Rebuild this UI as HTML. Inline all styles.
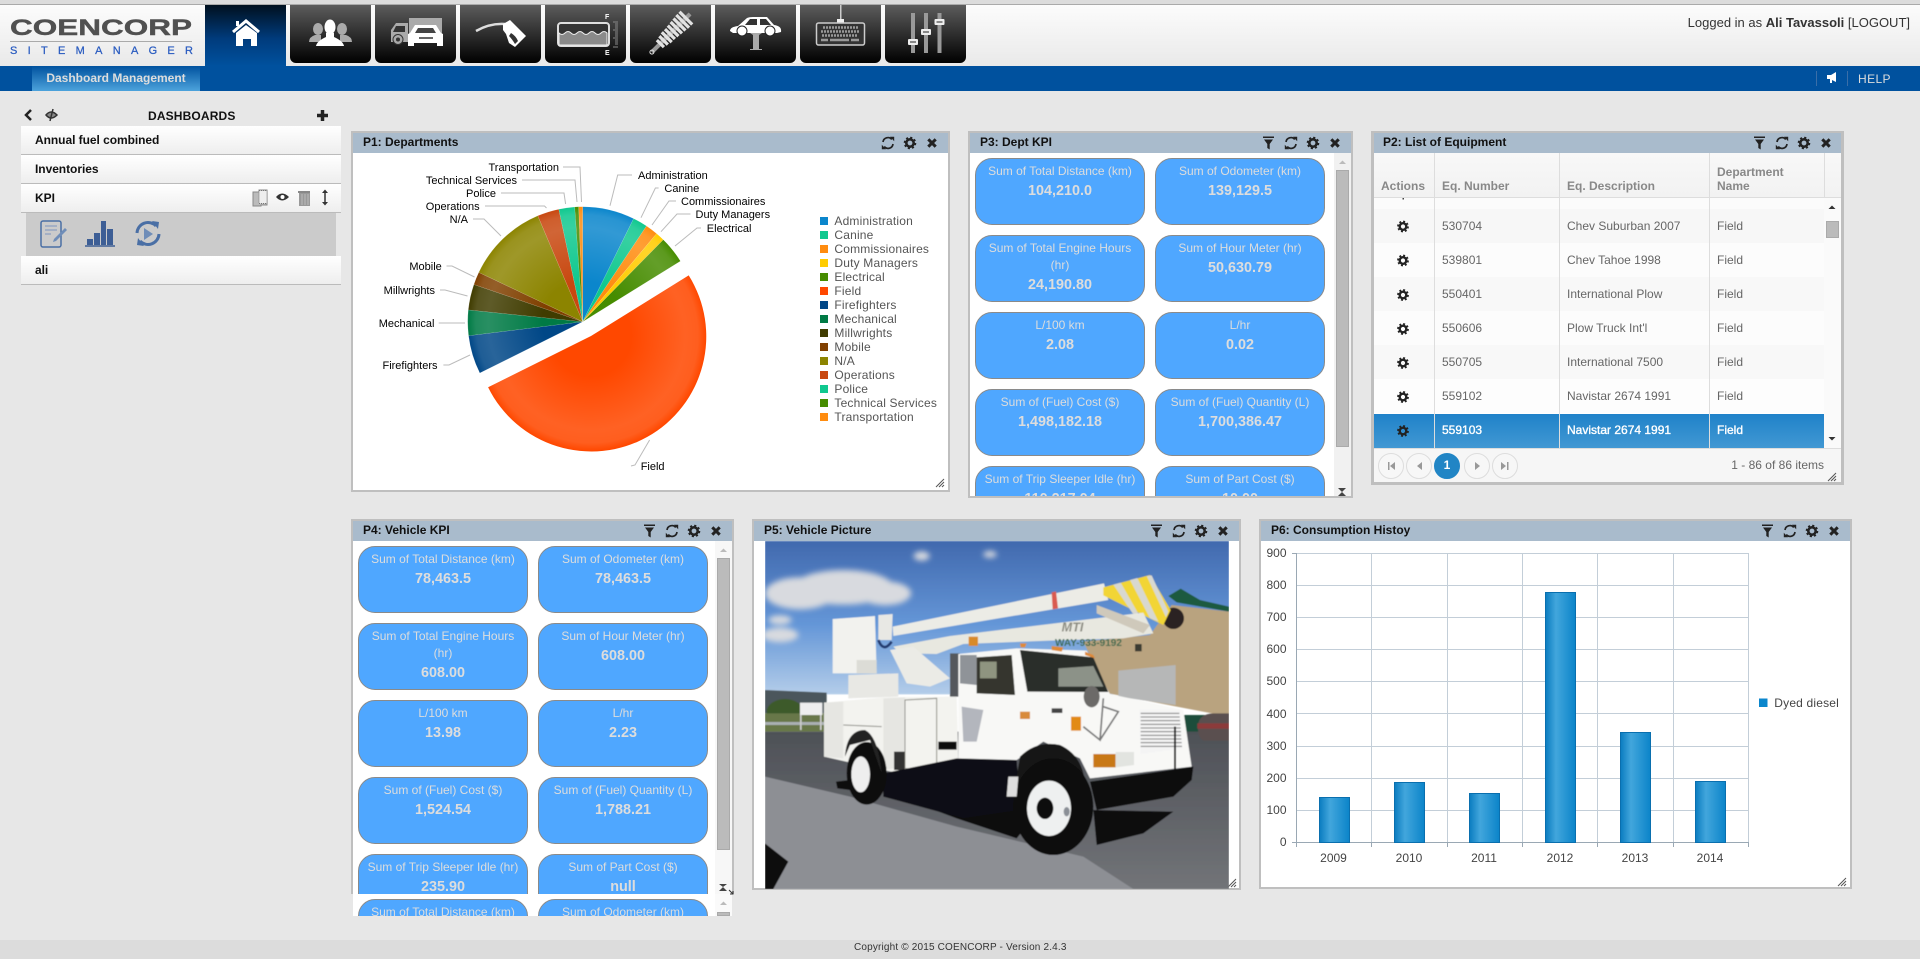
<!DOCTYPE html>
<html lang="en"><head><meta charset="utf-8"><title>COENCORP SiteManager</title>
<style>
*{box-sizing:border-box}
html,body{margin:0;padding:0;width:1920px;height:959px;overflow:hidden;background:#e7e7e7;font-family:"Liberation Sans",sans-serif;font-size:12px;color:#222}
.a{position:absolute}
.t{position:absolute;white-space:nowrap;line-height:14px}
.tab{position:absolute;top:5px;width:81px;height:58px;border-radius:0 0 6px 6px;background:linear-gradient(#5c5c5c,#000)}
.item{position:absolute;left:21px;width:320px;background:linear-gradient(#fff,#eee);border-bottom:1px solid #bbb;font-weight:bold;color:#111;padding-left:14px;line-height:28px;letter-spacing:-.05px}
.p{position:absolute;border:2px solid #bfbfbf;background:#fff}
.h{position:absolute;left:0;right:0;top:0;height:20px;background:#a9bbcc;font-weight:bold;color:#111;line-height:18px;padding-left:10px}
.clip{position:absolute;overflow:hidden;background:#fff}
.c{position:absolute;width:170px;height:67px;border:1px solid #8a8a8a;border-radius:17px;background:#4fa7ff;color:#ddd;text-align:center;line-height:17px;padding:4px 6px 0}
.c b{display:block;font-size:14.4px;line-height:22px}
.sb{position:absolute;border:1px solid #aaa;background:#bbb}
.row{position:absolute;left:1374px;width:450px;height:34px;color:#666}
.hd{position:absolute;color:#888;font-weight:bold;line-height:14px;white-space:nowrap}
.pg{position:absolute;top:453px;width:26px;height:26px;border:1px solid #ddd;border-radius:50%;background:#f7f7f7}
</style></head><body>

<div class="a" style="left:0;top:0;width:1920px;height:5px;background:#dcdcdc;border-bottom:1px solid #aaa"></div>
<div class="a" style="left:0;top:5px;width:1920px;height:61px;background:linear-gradient(#fcfcfc,#e9e9e9)"></div>
<div class="a" style="left:205px;top:5px;width:81px;height:61px;background:linear-gradient(#00101f,#003b7c 55%,#00519e)"></div>
<div class="tab" style="left:290px"></div><div class="tab" style="left:375px"></div><div class="tab" style="left:460px"></div><div class="tab" style="left:545px"></div><div class="tab" style="left:630px"></div><div class="tab" style="left:715px"></div><div class="tab" style="left:800px"></div><div class="tab" style="left:885px"></div>
<div class="a" style="left:0;top:66px;width:1920px;height:25px;background:#00519e"></div>
<div class="a" style="left:32px;top:66px;width:168px;height:25px;background:linear-gradient(#00529f,#4da3dc);color:#ddd;font-weight:bold;text-align:center;line-height:24px">Dashboard Management</div>
<div class="a" style="left:1816px;top:71px;width:1px;height:15px;background:#3a6ea8"></div>
<div class="a" style="left:1847px;top:71px;width:1px;height:15px;background:#3a6ea8"></div>
<div class="t" style="left:1858px;top:72px;color:#ddd;letter-spacing:.4px">HELP</div>
<div class="t" style="right:10px;top:16px;color:#333;font-size:13px">Logged in as <b>Ali Tavassoli</b> [LOGOUT]</div>

<div class="t" style="left:148px;top:109px;font-weight:bold;color:#111;letter-spacing:.15px">DASHBOARDS</div>
<div class="item" style="top:126px;height:29px">Annual fuel combined</div>
<div class="item" style="top:155px;height:29px">Inventories</div>
<div class="item" style="top:184px;height:29px">KPI</div>
<div class="a" style="left:26px;top:213px;width:310px;height:43px;background:#cbcbcb"></div>
<div class="item" style="top:256px;height:29px">ali</div>

<!-- P1 -->
<div class="p" style="left:351px;top:131px;width:599px;height:361px"><div class="h">P1: Departments</div></div>

<!-- P3 -->
<div class="p" style="left:968px;top:131px;width:385px;height:367px"><div class="h">P3: Dept KPI</div></div>
<div class="clip" style="left:970px;top:153px;width:364px;height:343px">
<div class="c" style="left:5px;top:5px">Sum of Total Distance (km)<b>104,210.0</b></div>
<div class="c" style="left:185px;top:5px">Sum of Odometer (km)<b>139,129.5</b></div>
<div class="c" style="left:5px;top:82px">Sum of Total Engine Hours (hr)<b>24,190.80</b></div>
<div class="c" style="left:185px;top:82px">Sum of Hour Meter (hr)<b>50,630.79</b></div>
<div class="c" style="left:5px;top:159px">L/100 km<b>2.08</b></div>
<div class="c" style="left:185px;top:159px">L/hr<b>0.02</b></div>
<div class="c" style="left:5px;top:236px">Sum of (Fuel) Cost ($)<b>1,498,182.18</b></div>
<div class="c" style="left:185px;top:236px">Sum of (Fuel) Quantity (L)<b>1,700,386.47</b></div>
<div class="c" style="left:5px;top:313px;padding-left:2px;padding-right:2px">Sum of Trip Sleeper Idle (hr)<b>110,217.04</b></div>
<div class="c" style="left:185px;top:313px">Sum of Part Cost ($)<b>10.00</b></div>
</div>
<div class="a" style="left:1334px;top:153px;width:17px;height:343px;background:#f1f1f1"></div>
<div class="sb" style="left:1336px;top:170px;width:13px;height:277px"></div>

<!-- P2 -->
<div class="p" style="left:1371px;top:131px;width:473px;height:354px;border-width:2px 3px 3px"><div class="h" style="padding-left:9px">P2: List of Equipment</div></div>
<div class="a" style="left:1374px;top:153px;width:467px;height:45px;background:linear-gradient(#f8f8f8,#f2f2f2);border-bottom:1px solid #ddd"></div>
<div class="a" style="left:1374px;top:198px;width:450px;height:11px;background:#fbfbfb"></div>
<div class="a" style="left:1824px;top:198px;width:17px;height:251px;background:#fafafa"></div>
<div class="row" style="top:209px;background:#f7f7f7"></div>
<div class="row" style="top:243px;background:#fcfcfc"></div>
<div class="row" style="top:277px;background:#f8f8f8"></div>
<div class="row" style="top:311px;background:#fcfcfc"></div>
<div class="row" style="top:345px;background:#f8f8f8"></div>
<div class="row" style="top:379px;background:#fdfdfd"></div>
<div class="row" style="top:414px;background:linear-gradient(#1f82c9,#4298d3)"></div>
<div class="a" style="left:1434px;top:153px;width:1px;height:295px;background:#ddd"></div>
<div class="a" style="left:1559px;top:153px;width:1px;height:295px;background:#ddd"></div>
<div class="a" style="left:1709px;top:153px;width:1px;height:295px;background:#ddd"></div>
<div class="a" style="left:1824px;top:153px;width:1px;height:45px;background:#ddd"></div>
<div class="hd" style="left:1381px;top:179px">Actions</div>
<div class="hd" style="left:1442px;top:179px">Eq. Number</div>
<div class="hd" style="left:1567px;top:179px">Eq. Description</div>
<div class="hd" style="left:1717px;top:165px">Department</div>
<div class="hd" style="left:1717px;top:179px">Name</div>
<div class="t" style="left:1442px;top:219px;color:#666">530704</div><div class="t" style="left:1567px;top:219px;color:#666">Chev Suburban 2007</div><div class="t" style="left:1717px;top:219px;color:#666">Field</div>
<div class="t" style="left:1442px;top:253px;color:#666">539801</div><div class="t" style="left:1567px;top:253px;color:#666">Chev Tahoe 1998</div><div class="t" style="left:1717px;top:253px;color:#666">Field</div>
<div class="t" style="left:1442px;top:287px;color:#666">550401</div><div class="t" style="left:1567px;top:287px;color:#666">International Plow</div><div class="t" style="left:1717px;top:287px;color:#666">Field</div>
<div class="t" style="left:1442px;top:321px;color:#666">550606</div><div class="t" style="left:1567px;top:321px;color:#666">Plow Truck Int'l</div><div class="t" style="left:1717px;top:321px;color:#666">Field</div>
<div class="t" style="left:1442px;top:355px;color:#666">550705</div><div class="t" style="left:1567px;top:355px;color:#666">International 7500</div><div class="t" style="left:1717px;top:355px;color:#666">Field</div>
<div class="t" style="left:1442px;top:389px;color:#666">559102</div><div class="t" style="left:1567px;top:389px;color:#666">Navistar 2674 1991</div><div class="t" style="left:1717px;top:389px;color:#666">Field</div>
<div class="t" style="left:1442px;top:423px;color:#fff;-webkit-text-stroke:.35px #fff">559103</div><div class="t" style="left:1567px;top:423px;color:#fff;-webkit-text-stroke:.35px #fff">Navistar 2674 1991</div><div class="t" style="left:1717px;top:423px;color:#fff;-webkit-text-stroke:.35px #fff">Field</div>
<div class="sb" style="left:1826px;top:221px;width:13px;height:17px"></div>
<div class="a" style="left:1374px;top:448px;width:467px;height:34px;background:#f6f6f6;border-top:1px solid #ddd"></div>
<div class="pg" style="left:1378px"></div><div class="pg" style="left:1406px"></div>
<div class="pg" style="left:1434px;background:#2185c5;border-color:#2185c5;color:#fff;font-weight:bold;text-align:center;line-height:23px">1</div>
<div class="pg" style="left:1464px"></div><div class="pg" style="left:1492px"></div>
<div class="t" style="right:96px;top:458px;color:#666">1 - 86 of 86 items</div>

<!-- P4 -->
<div class="p" style="left:351px;top:519px;width:383px;height:380px"><div class="h">P4: Vehicle KPI</div></div>
<div class="clip" style="left:353px;top:541px;width:362px;height:353px">
<div class="c" style="left:5px;top:5px">Sum of Total Distance (km)<b>78,463.5</b></div>
<div class="c" style="left:185px;top:5px">Sum of Odometer (km)<b>78,463.5</b></div>
<div class="c" style="left:5px;top:82px">Sum of Total Engine Hours (hr)<b>608.00</b></div>
<div class="c" style="left:185px;top:82px">Sum of Hour Meter (hr)<b>608.00</b></div>
<div class="c" style="left:5px;top:159px">L/100 km<b>13.98</b></div>
<div class="c" style="left:185px;top:159px">L/hr<b>2.23</b></div>
<div class="c" style="left:5px;top:236px">Sum of (Fuel) Cost ($)<b>1,524.54</b></div>
<div class="c" style="left:185px;top:236px">Sum of (Fuel) Quantity (L)<b>1,788.21</b></div>
<div class="c" style="left:5px;top:313px;padding-left:2px;padding-right:2px">Sum of Trip Sleeper Idle (hr)<b>235.90</b></div>
<div class="c" style="left:185px;top:313px">Sum of Part Cost ($)<b>null</b></div>
</div>
<div class="a" style="left:715px;top:541px;width:17px;height:353px;background:#f7f7f7"></div>
<div class="sb" style="left:717px;top:558px;width:13px;height:292px"></div>
<div class="a" style="left:351px;top:894px;width:383px;height:30px;background:#e7e7e7"></div>
<div class="clip" style="left:353px;top:894px;width:362px;height:22px">
<div class="c" style="left:5px;top:5px">Sum of Total Distance (km)</div>
<div class="c" style="left:185px;top:5px">Sum of Odometer (km)</div>
</div>
<div class="a" style="left:715px;top:894px;width:17px;height:22px;background:#fafafa"></div>
<div class="sb" style="left:717px;top:912px;width:13px;height:4px"></div>

<!-- P5 -->
<div class="p" style="left:752px;top:519px;width:489px;height:371px"><div class="h">P5: Vehicle Picture</div></div>
<!-- P6 -->
<div class="p" style="left:1259px;top:519px;width:593px;height:370px"><div class="h">P6: Consumption Histoy</div></div>

<div class="a" style="left:0;top:940px;width:1920px;height:19px;background:#dcdcdc"></div>
<div class="t" style="left:854px;top:941px;font-size:10px;color:#333;letter-spacing:.17px">Copyright © 2015 COENCORP - Version 2.4.3</div>

<svg class="a" style="left:0;top:0;pointer-events:none" width="1920" height="959" viewBox="0 0 1920 959" font-family="Liberation Sans, sans-serif">
<defs>
<radialGradient id="bev1" gradientUnits="userSpaceOnUse" cx="582.7" cy="321.7" r="115"><stop offset=".35" stop-color="#fff" stop-opacity="0"/><stop offset=".82" stop-color="#fff" stop-opacity=".16"/><stop offset=".93" stop-color="#fff" stop-opacity=".12"/><stop offset="1" stop-color="#fff" stop-opacity="0"/></radialGradient>
<radialGradient id="bev2" gradientUnits="userSpaceOnUse" cx="591" cy="336" r="115"><stop offset=".35" stop-color="#fff" stop-opacity="0"/><stop offset=".82" stop-color="#fff" stop-opacity=".14"/><stop offset=".93" stop-color="#fff" stop-opacity=".12"/><stop offset="1" stop-color="#fff" stop-opacity="0"/></radialGradient>
<linearGradient id="bar"><stop offset="0" stop-color="#0a7cc0"/><stop offset=".35" stop-color="#42a6dc"/><stop offset="1" stop-color="#0b84c9"/></linearGradient>
<linearGradient id="sky" x1="0" y1="0" x2="0" y2="1"><stop offset="0" stop-color="#4169ae"/><stop offset=".55" stop-color="#6597d8"/><stop offset="1" stop-color="#b4cde9"/></linearGradient>
<linearGradient id="road" x1="0" y1="0" x2="0" y2="1"><stop offset="0" stop-color="#4e5157"/><stop offset="1" stop-color="#727478"/></linearGradient>
<filter id="soft"><feGaussianBlur stdDeviation="1.4"/></filter>
<filter id="soft2" x="-20%" y="-40%" width="140%" height="180%"><feGaussianBlur stdDeviation="9"/></filter>
</defs>

<!-- logo -->
<text x="10" y="35" font-size="22.500" font-weight="bold" fill="#505050" stroke="#505050" stroke-width=".4" textLength="182" lengthAdjust="spacingAndGlyphs">COENCORP</text>
<rect x="10" y="41" width="182" height="1" fill="#aaa"/>
<text x="10" y="54" font-size="11" fill="#2a5cc0" stroke="#2a5cc0" stroke-width=".25" textLength="183" lengthAdjust="spacing">SITEMANAGER</text>

<!-- home -->
<path d="M233 32L246 21L259 32" fill="none" stroke="#fff" stroke-width="3"/><rect x="236" y="21" width="3" height="5" fill="#fff"/>
<path d="M236 33L246 25L257 33V46H251V39H243V46H236Z" fill="#fff"/>
<!-- people -->
<g fill="#aaa"><ellipse cx="318" cy="29" rx="5" ry="6"/><path d="M309 42q0-5 6-7h6v7z"/><ellipse cx="342" cy="29" rx="5" ry="6"/><path d="M352 42q0-5-6-7h-6v7z"/></g>
<g fill="#fff"><ellipse cx="330" cy="27" rx="5.500" ry="7.500"/><path d="M316 46q1-5 10-9v-4h8v4q9 4 10 9z"/></g>
<!-- truck -->
<g fill="#aaa"><rect x="409" y="18" width="33" height="19"/><path d="M391 42V30l5-7h12v19z"/></g><path d="M396 26h9v6h-12z" fill="#333"/><circle cx="398" cy="39.500" r="5" fill="#aaa" stroke="#333"/><circle cx="398" cy="39.500" r="2" fill="#333"/>
<path d="M415 25h21l5 8 2 1v12h-6v-3h-23v3h-6V34l2-1z" fill="#fff"/><path d="M418 28h15l3 5h-21z" fill="#444"/><rect x="419" y="37" width="14" height="2" fill="#666"/>
<!-- nozzle -->
<path d="M476 31Q490 23 505 24" fill="none" stroke="#ddd" stroke-width="2.500"/>
<path d="M503 24l7-4 16 16-11 11-6-4-3-9-3-4z" fill="#fff"/><path d="M511 33q5 3 7 8l-3 3q-3-5-6-8z" fill="#333"/>
<!-- tank -->
<rect x="558" y="23" width="51" height="23" rx="3" fill="#333" stroke="#ddd" stroke-width="2"/><path d="M559 33q3 3 6 0t6 0 6 0 6 0 6 0 6 0 6 0 6 0V45H559Z" fill="#8a8a8a" stroke="#eee"/>
<text x="605" y="19" font-size="7" font-weight="bold" fill="#fff">F</text><text x="605" y="55" font-size="7" font-weight="bold" fill="#fff">E</text>
<path d="M613 22h5M615 24h3M615 26h3M615 28h3M613 30h5M615 32h3M615 34h3M615 36h3M613 38h5M615 40h3M615 42h3M615 44h3M613 47h5" stroke="#888" stroke-width="1"/>
<!-- spring -->
<g transform="translate(671 33) rotate(-45) rotate(90)"><rect x="-2" y="-26" width="4" height="52" fill="#999"/></g>
<g transform="translate(671 33) rotate(-45)"><rect x="-27" y="-2" width="54" height="4" fill="#999"/><path d="M-15-5v10M-10.500-6v12M-6-7v14M-1.500-7v14M3-7.500v15M7.500-8v16M12-8.500v17M16.500-9v18M21-9v18" stroke="#e2e2e2" stroke-width="3.200"/><circle cx="-27" cy="0" r="2" fill="none" stroke="#ddd"/></g>
<!-- lift -->
<path d="M730 31q0-4 8-5l9-8q2-1 6-1h14l7 8q8 1 7 7l-4 1H733z" fill="#fff"/><path d="M750 19h7v6h-12zM760 19h6l5 6h-11z" fill="#333"/>
<circle cx="742" cy="31" r="5" fill="#fff" stroke="#222"/><circle cx="770" cy="31" r="5" fill="#fff" stroke="#222"/>
<path d="M750 33h12l-3 2v14h3v1h-12v-1h3V35z" fill="#aaa"/>
<!-- keyboard -->
<rect x="840" y="5" width="1.500" height="16" fill="#ccc"/><rect x="837" y="19" width="7" height="4" fill="#eee"/>
<rect x="816.500" y="23" width="48" height="22" rx="2" fill="#333" stroke="#ccc" stroke-width="1.500"/>
<path d="M823 27.500h35M821 31.500h38M822 35.500h36" stroke="#999" stroke-width="2.500" stroke-dasharray="2 1" fill="none"/><path d="M821 40h7M830 40h19M851 40h8" stroke="#999" stroke-width="2.500"/>
<!-- sliders -->
<g fill="#999"><rect x="911" y="13" width="4" height="40"/><rect x="924" y="13" width="4" height="40"/><rect x="937.500" y="13" width="4" height="40"/></g>
<g fill="#eee"><rect x="908" y="39" width="10" height="6" rx="1"/><rect x="921" y="29" width="10" height="6" rx="1"/><rect x="934.500" y="19" width="10" height="6" rx="1"/></g>
<path d="M910 42h6M923 32h6M936.500 22h6" stroke="#222"/>
<!-- help flag -->
<path d="M1827 75h4l5-3v10l-4-2v3h-2v-4h-3z" fill="#fff"/>

<!-- sidebar icons -->
<path d="M31 110l-5 5 5 5" fill="none" stroke="#222" stroke-width="2.500"/>
<path d="M46 115q5-6 11 0-6 6-11 0z" fill="#888" stroke="#333" stroke-width="1.500"/><path d="M53 109l-3 12" stroke="#333" stroke-width="1.500"/>
<path d="M322.500 110v11M317 115.500h11" stroke="#222" stroke-width="3.500"/>
<path d="M253 192h6v-2h8v15h-6v1h-8z" fill="#bbb" stroke="#888"/><rect x="259" y="190.500" width="8" height="13" fill="#eee" stroke="#777" stroke-dasharray="1 1"/>
<path d="M276 197q6-7 13 0-7 7-13 0z" fill="#333"/><circle cx="282.500" cy="197" r="2" fill="#fff"/>
<path d="M299 193h11v13h-11z" fill="#999"/><rect x="298" y="191" width="12" height="2" fill="#888"/><path d="M302 194v11M305 194v11M308 194v11" stroke="#bbb"/>
<path d="M325 191v12" stroke="#333" stroke-width="1.500"/><path d="M322 193l3-3.500 3 3.500zM322 202l3 3.500 3-3.500z" fill="#333"/>
<rect x="41" y="221" width="20" height="26" rx="2" fill="none" stroke="#4a6fa5" stroke-width="1.500"/><path d="M45 226h12M45 230h12M45 234h6" stroke="#7c96bf"/><path d="M65 228l2 2-11 11-3 1 1-3z" fill="#6f8db8"/>
<path d="M85 246h30" stroke="#3d5e95" stroke-width="1.500"/><path d="M87 239h6v6h-6zM94 233h6v12h-6zM101 221h5v24h-5zM107 229h6v16h-6z" fill="#3d5e95"/>
<path d="M137 233a11 11 0 0 1 19-7M159 234a11 11 0 0 1-19 7" fill="none" stroke="#4a6fa5" stroke-width="3"/><path d="M152 221l7 1-1 7zM144 246l-7-1 1-7z" fill="#4a6fa5"/><path d="M144 228l9 6-9 6z" fill="#6f8db8"/>

<!-- panel header icons -->
<g>
<g transform="translate(888 143)"><path d="M-5-1A5 5 0 0 1 3.800-3.600M5 1A5 5 0 0 1-3.800 3.600" fill="none" stroke="#222" stroke-width="1.700"/><path d="M2-6.200H6.200V-1.800zM-2 6.200H-6.200V1.800z" fill="#222"/></g>
<g transform="translate(910 143)"><circle r="3.700" fill="none" stroke="#222" stroke-width="2.600"/><circle r="5.400" fill="none" stroke="#222" stroke-width="1.800" stroke-dasharray="2.120 2.120"/></g>
<g transform="translate(932 143)"><path d="M-3.700-3.700L3.700 3.700M3.700-3.700L-3.700 3.700" stroke="#222" stroke-width="3"/></g>
</g>
<g>
<g transform="translate(1269 143)"><path d="M-6-6.500H5V-5H-6zM-5-3.500H4L.7 1V6.500L-1.700 5V1z" fill="#222"/></g>
<g transform="translate(1291 143)"><path d="M-5-1A5 5 0 0 1 3.800-3.600M5 1A5 5 0 0 1-3.800 3.600" fill="none" stroke="#222" stroke-width="1.700"/><path d="M2-6.200H6.200V-1.800zM-2 6.200H-6.200V1.800z" fill="#222"/></g>
<g transform="translate(1313 143)"><circle r="3.700" fill="none" stroke="#222" stroke-width="2.600"/><circle r="5.400" fill="none" stroke="#222" stroke-width="1.800" stroke-dasharray="2.120 2.120"/></g>
<g transform="translate(1335 143)"><path d="M-3.700-3.700L3.700 3.700M3.700-3.700L-3.700 3.700" stroke="#222" stroke-width="3"/></g>
</g>
<g>
<g transform="translate(1760 143)"><path d="M-6-6.500H5V-5H-6zM-5-3.500H4L.7 1V6.500L-1.700 5V1z" fill="#222"/></g>
<g transform="translate(1782 143)"><path d="M-5-1A5 5 0 0 1 3.800-3.600M5 1A5 5 0 0 1-3.800 3.600" fill="none" stroke="#222" stroke-width="1.700"/><path d="M2-6.200H6.200V-1.800zM-2 6.200H-6.200V1.800z" fill="#222"/></g>
<g transform="translate(1804 143)"><circle r="3.700" fill="none" stroke="#222" stroke-width="2.600"/><circle r="5.400" fill="none" stroke="#222" stroke-width="1.800" stroke-dasharray="2.120 2.120"/></g>
<g transform="translate(1826 143)"><path d="M-3.700-3.700L3.700 3.700M3.700-3.700L-3.700 3.700" stroke="#222" stroke-width="3"/></g>
</g>
<g>
<g transform="translate(650 531)"><path d="M-6-6.500H5V-5H-6zM-5-3.500H4L.7 1V6.500L-1.700 5V1z" fill="#222"/></g>
<g transform="translate(672 531)"><path d="M-5-1A5 5 0 0 1 3.800-3.600M5 1A5 5 0 0 1-3.800 3.600" fill="none" stroke="#222" stroke-width="1.700"/><path d="M2-6.200H6.200V-1.800zM-2 6.200H-6.200V1.800z" fill="#222"/></g>
<g transform="translate(694 531)"><circle r="3.700" fill="none" stroke="#222" stroke-width="2.600"/><circle r="5.400" fill="none" stroke="#222" stroke-width="1.800" stroke-dasharray="2.120 2.120"/></g>
<g transform="translate(716 531)"><path d="M-3.700-3.700L3.700 3.700M3.700-3.700L-3.700 3.700" stroke="#222" stroke-width="3"/></g>
</g>
<g>
<g transform="translate(1157 531)"><path d="M-6-6.500H5V-5H-6zM-5-3.500H4L.7 1V6.500L-1.700 5V1z" fill="#222"/></g>
<g transform="translate(1179 531)"><path d="M-5-1A5 5 0 0 1 3.800-3.600M5 1A5 5 0 0 1-3.800 3.600" fill="none" stroke="#222" stroke-width="1.700"/><path d="M2-6.200H6.200V-1.800zM-2 6.200H-6.200V1.800z" fill="#222"/></g>
<g transform="translate(1201 531)"><circle r="3.700" fill="none" stroke="#222" stroke-width="2.600"/><circle r="5.400" fill="none" stroke="#222" stroke-width="1.800" stroke-dasharray="2.120 2.120"/></g>
<g transform="translate(1223 531)"><path d="M-3.700-3.700L3.700 3.700M3.700-3.700L-3.700 3.700" stroke="#222" stroke-width="3"/></g>
</g>
<g>
<g transform="translate(1768 531)"><path d="M-6-6.500H5V-5H-6zM-5-3.500H4L.7 1V6.500L-1.700 5V1z" fill="#222"/></g>
<g transform="translate(1790 531)"><path d="M-5-1A5 5 0 0 1 3.800-3.600M5 1A5 5 0 0 1-3.800 3.600" fill="none" stroke="#222" stroke-width="1.700"/><path d="M2-6.200H6.200V-1.800zM-2 6.200H-6.200V1.800z" fill="#222"/></g>
<g transform="translate(1812 531)"><circle r="3.700" fill="none" stroke="#222" stroke-width="2.600"/><circle r="5.400" fill="none" stroke="#222" stroke-width="1.800" stroke-dasharray="2.120 2.120"/></g>
<g transform="translate(1834 531)"><path d="M-3.700-3.700L3.700 3.700M3.700-3.700L-3.700 3.700" stroke="#222" stroke-width="3"/></g>
</g>

<!-- pie -->
<g stroke="#fff" stroke-opacity=".2" stroke-width=".5">
<path d="M582.700 321.700L582.700 206.700A115 115 0 0 1 633.600 218.600Z" fill="#0b86cc"/>
<path d="M582.700 321.700L633.600 218.600A115 115 0 0 1 646.500 226Z" fill="#10c88f"/>
<path d="M582.700 321.700L646.500 226A115 115 0 0 1 656.600 233.600Z" fill="#ff8c0f"/>
<path d="M582.700 321.700L656.600 233.600A115 115 0 0 1 663.300 239.700Z" fill="#ffcc00"/>
<path d="M582.700 321.700L663.300 239.700A115 115 0 0 1 680.400 261.100Z" fill="#468c00"/>
<path d="M582.700 321.700L479.800 373A115 115 0 0 1 468.600 335.700Z" fill="#004787"/>
<path d="M582.700 321.700L468.600 335.700A115 115 0 0 1 468.300 309.900Z" fill="#007a45"/>
<path d="M582.700 321.700L468.300 309.900A115 115 0 0 1 473.900 284.500Z" fill="#403c00"/>
<path d="M582.700 321.700L473.900 284.500A115 115 0 0 1 478.800 272.400Z" fill="#804000"/>
<path d="M582.700 321.700L478.800 272.400A115 115 0 0 1 537.800 215.800Z" fill="#8c8400"/>
<path d="M582.700 321.700L537.800 215.800A115 115 0 0 1 558.800 209.200Z" fill="#c84810"/>
<path d="M582.700 321.700L558.800 209.200A115 115 0 0 1 574.700 207Z" fill="#10c88f"/>
<path d="M582.700 321.700L574.700 207A115 115 0 0 1 578.700 206.800Z" fill="#468c00"/>
<path d="M582.700 321.700L578.700 206.800A115 115 0 0 1 582.700 206.700Z" fill="#ff8c0f"/>
</g>
<path d="M582.700 321.700L479.800 373A115 115 0 0 1 582.700 206.700A115 115 0 0 1 680.400 261.100Z" fill="url(#bev1)"/>
<path d="M591 336L688.700 275.400A115 115 0 1 1 488.100 387.300Z" fill="#ff4800"/>
<path d="M591 336L688.700 275.400A115 115 0 1 1 488.100 387.300Z" fill="url(#bev2)"/>
<g fill="none" stroke="#bbb" stroke-width="1">
<path d="M563 167H580L581.500 202M522 180H575L577 202M501 193H564L565.600 204M485 206H544.500L546.500 208M473 219H484L501 236M446.500 266H452L474.500 277M440 290H445L467.500 296M438.700 323H465M443.400 365H449L470 355M631 466L635 465L649.600 440M632 175H617.700L610 205.700M658.600 188H655.400L641 217.700M676 201H669L652 225M690.500 214H677L661 231.700M701 228H697L675 246"/>
</g>
<g font-size="11" fill="#000" text-anchor="end">
<text x="559" y="171">Transportation</text><text x="517" y="184">Technical Services</text><text x="496" y="197">Police</text><text x="479.600" y="210">Operations</text><text x="468" y="223">N/A</text><text x="441.800" y="270">Mobile</text><text x="435" y="294">Millwrights</text><text x="434.400" y="327">Mechanical</text><text x="437.500" y="369">Firefighters</text>
</g>
<g font-size="11" fill="#000">
<text x="640.700" y="470">Field</text><text x="638" y="179">Administration</text><text x="664.400" y="192">Canine</text><text x="681" y="205">Commissionaires</text><text x="695.500" y="218">Duty Managers</text><text x="706.800" y="232">Electrical</text>
</g>
<g>
<rect x="820" y="217" width="8" height="8" fill="#0b86cc"/><rect x="820" y="231" width="8" height="8" fill="#10c88f"/><rect x="820" y="245" width="8" height="8" fill="#ff8c0f"/><rect x="820" y="259" width="8" height="8" fill="#ffcc00"/><rect x="820" y="273" width="8" height="8" fill="#468c00"/><rect x="820" y="287" width="8" height="8" fill="#ff4800"/><rect x="820" y="301" width="8" height="8" fill="#004787"/><rect x="820" y="315" width="8" height="8" fill="#007a45"/><rect x="820" y="329" width="8" height="8" fill="#403c00"/><rect x="820" y="343" width="8" height="8" fill="#804000"/><rect x="820" y="357" width="8" height="8" fill="#8c8400"/><rect x="820" y="371" width="8" height="8" fill="#c84810"/><rect x="820" y="385" width="8" height="8" fill="#10c88f"/><rect x="820" y="399" width="8" height="8" fill="#468c00"/><rect x="820" y="413" width="8" height="8" fill="#ff8c0f"/>
</g>
<g font-size="12" fill="#555" letter-spacing=".18">
<text x="834.400" y="225">Administration</text><text x="834.400" y="239">Canine</text><text x="834.400" y="253">Commissionaires</text><text x="834.400" y="267">Duty Managers</text><text x="834.400" y="281">Electrical</text><text x="834.400" y="295">Field</text><text x="834.400" y="309">Firefighters</text><text x="834.400" y="323">Mechanical</text><text x="834.400" y="337">Millwrights</text><text x="834.400" y="351">Mobile</text><text x="834.400" y="365">N/A</text><text x="834.400" y="379">Operations</text><text x="834.400" y="393">Police</text><text x="834.400" y="407">Technical Services</text><text x="834.400" y="421">Transportation</text>
</g>

<!-- resize grips -->
<path d="M936 487l8-8M939 487l5-5M942 487l2-2" stroke="#555" fill="none"/>
<path d="M1828 481l8-8M1831 481l5-5M1834 481l2-2" stroke="#555" fill="none"/>
<path d="M1228 887l8-8M1231 887l5-5M1234 887l2-2" stroke="#555" fill="none"/>
<path d="M1838 886l8-8M1841 886l5-5M1844 886l2-2" stroke="#555" fill="none"/>
<path d="M1338 488h8l-4 4 4 4h-8l4-4z" fill="#444"/>
<path d="M719 884h8l-4 3 4 4h-8l4-4z" fill="#444"/><path d="M729 890l4 4M733 891v3h-3" stroke="#333" fill="none"/>

<!-- scroll arrows -->
<path d="M1339 164l3.500-3.500 3.500 3.500z" fill="#bbb"/>
<path d="M720 552l3.500-3.500 3.500 3.500z" fill="#bbb"/><path d="M720 905l3.500-3.500 3.500 3.500z" fill="#bbb"/>
<path d="M1828.500 209l3.500-3.500 3.500 3.500z" fill="#333"/><path d="M1828.500 437l3.500 3.500 3.500-3.500z" fill="#333"/>

<!-- table gears -->
<g transform="translate(1403 226.500)"><circle r="3.300" fill="none" stroke="#222" stroke-width="2.400"/><circle r="5" fill="none" stroke="#222" stroke-width="1.800" stroke-dasharray="1.960 1.960"/></g>
<g transform="translate(1403 260.500)"><circle r="3.300" fill="none" stroke="#222" stroke-width="2.400"/><circle r="5" fill="none" stroke="#222" stroke-width="1.800" stroke-dasharray="1.960 1.960"/></g>
<g transform="translate(1403 295)"><circle r="3.300" fill="none" stroke="#222" stroke-width="2.400"/><circle r="5" fill="none" stroke="#222" stroke-width="1.800" stroke-dasharray="1.960 1.960"/></g>
<g transform="translate(1403 329)"><circle r="3.300" fill="none" stroke="#222" stroke-width="2.400"/><circle r="5" fill="none" stroke="#222" stroke-width="1.800" stroke-dasharray="1.960 1.960"/></g>
<g transform="translate(1403 363)"><circle r="3.300" fill="none" stroke="#222" stroke-width="2.400"/><circle r="5" fill="none" stroke="#222" stroke-width="1.800" stroke-dasharray="1.960 1.960"/></g>
<g transform="translate(1403 397)"><circle r="3.300" fill="none" stroke="#222" stroke-width="2.400"/><circle r="5" fill="none" stroke="#222" stroke-width="1.800" stroke-dasharray="1.960 1.960"/></g>
<g transform="translate(1403 431)"><circle r="3.300" fill="none" stroke="#222" stroke-width="2.400"/><circle r="5" fill="none" stroke="#222" stroke-width="1.800" stroke-dasharray="1.960 1.960"/></g>
<rect x="1402.500" y="198" width="1.500" height="1.500" fill="#444"/>
<!-- pager glyphs -->
<g fill="#999"><path d="M1388 462h1.500v8H1388zM1395 462v8l-5-4z"/><path d="M1422 462v8l-5-4z"/><path d="M1475 462v8l5-4z"/><path d="M1501 462v8l5-4zM1507 462h1.500v8H1507z"/></g>

<!-- bar chart -->
<g stroke="#c3ced8" stroke-width="1" fill="none">
<path d="M1296 553.500H1748M1296 585.500H1748M1296 617.500H1748M1296 649.500H1748M1296 681.500H1748M1296 713.500H1748M1296 746.500H1748M1296 778.500H1748M1296 810.500H1748"/>
<path d="M1371.500 553V842M1447.500 553V842M1522.500 553V842M1597.500 553V842M1673.500 553V842M1748.500 553V842"/>
</g>
<g stroke="#9aa8b4" fill="none"><path d="M1296.500 553V847M1296 842.500H1749M1371.500 842V847M1447.500 842V847M1522.500 842V847M1597.500 842V847M1673.500 842V847M1748.500 842V847M1292 553.500h5M1292 842.500h5"/></g>
<g fill="url(#bar)" stroke="#0a6fae">
<rect x="1319.500" y="797.500" width="30" height="45"/>
<rect x="1394.500" y="782.500" width="30" height="60"/>
<rect x="1469.500" y="793.500" width="30" height="49"/>
<rect x="1545.500" y="592.500" width="30" height="250"/>
<rect x="1620.500" y="732.500" width="30" height="110"/>
<rect x="1695.500" y="781.500" width="30" height="61"/>
</g>
<g font-size="12" fill="#444" text-anchor="end">
<text x="1286.500" y="557">900</text><text x="1286.500" y="589">800</text><text x="1286.500" y="621">700</text><text x="1286.500" y="653">600</text><text x="1286.500" y="685">500</text><text x="1286.500" y="718">400</text><text x="1286.500" y="750">300</text><text x="1286.500" y="782">200</text><text x="1286.500" y="814">100</text><text x="1286.500" y="846">0</text>
</g>
<g font-size="12" fill="#444" text-anchor="middle">
<text x="1333.500" y="862">2009</text><text x="1409" y="862">2010</text><text x="1484" y="862">2011</text><text x="1560" y="862">2012</text><text x="1635" y="862">2013</text><text x="1710" y="862">2014</text>
</g>
<rect x="1759" y="698.500" width="8.500" height="8.500" fill="#0b86cc"/>
<text x="1774.300" y="707" font-size="12" fill="#444" textLength="64.500">Dyed diesel</text>

<!-- truck photo -->
<svg x="765" y="541" width="464" height="348" viewBox="45 93 1392 1044" preserveAspectRatio="none">
<g filter="url(#soft)">
<rect x="45" y="93" width="1392" height="460" fill="url(#sky)"/>
<g fill="#d8dadf" filter="url(#soft2)"><ellipse cx="150" cy="250" rx="105" ry="48"/><ellipse cx="280" cy="232" rx="150" ry="52"/><ellipse cx="405" cy="250" rx="78" ry="36"/><ellipse cx="90" cy="375" rx="55" ry="22"/><ellipse cx="90" cy="330" rx="35" ry="14"/><ellipse cx="515" cy="138" rx="24" ry="14"/><ellipse cx="720" cy="133" rx="20" ry="10"/></g>
<path d="M45 540L230 548V610H45Z" fill="#4b575c"/>
<ellipse cx="105" cy="605" rx="55" ry="38" fill="#3c5a2c"/>
<rect x="45" y="610" width="180" height="55" fill="#67774a"/>
<rect x="45" y="636" width="180" height="9" fill="#aab0b2"/>
<rect x="150" y="578" width="67" height="37" fill="#eee"/><rect x="150" y="615" width="5" height="45" fill="#ccc"/><rect x="210" y="615" width="5" height="45" fill="#ccc"/>
<path d="M1000 395L1200 375 1265 285 1437 305V620L1280 590 1075 550Z" fill="#b9a37f"/>
<path d="M1255 258L1292 236 1350 270 1437 290V305L1280 277Z" fill="#1f5a40"/>
<path d="M1300 615H1437V672H1300Z" fill="#1c4d3a"/>
<path d="M1105 482L1277 465V585L1105 560Z" fill="#b6b7b7"/>
<rect x="1155" y="402" width="20" height="22" fill="#3a3a30"/>
<path d="M45 665H1437V1137H45Z" fill="url(#road)"/>
<path d="M45 800L300 860 620 950 1000 1040 1150 1137H45Z" fill="#8d8f94"/>
<path d="M45 1000L115 1055 70 1137H45Z" fill="#0a0a0a"/>
<path d="M1345 640Q1350 612 1390 610H1437V692H1360Q1340 680 1345 640Z" fill="#5a5050"/><rect x="1342" y="640" width="95" height="16" fill="#8c3a3a"/>
<!-- shadow -->
<path d="M400 800L800 760 820 960 800 985 620 925 500 880 400 850Z" fill="#0c0c10"/>
<path d="M1030 900L1270 905 1180 970 1040 1005Z" fill="#0c0c10"/>
<path d="M258 815L300 810 300 840 262 835Z" fill="#111"/>
<!-- upper boom -->
<path d="M428 350L1062 220 1075 270 430 378Z" fill="#ecece6"/>
<path d="M905 247L918 244 924 295 908 298Z" fill="#d95a50"/>
<circle cx="1270" cy="325" r="32" fill="#2a2222"/>
<path d="M1060 232L1200 195 1262 300 1240 345 1060 256Z" fill="#f2d535"/>
<path d="M1090 224L1112 218 1170 320 1148 310ZM1140 210L1162 204 1225 335 1200 325ZM1190 198L1205 196 1255 305 1248 322Z" fill="#d8d8d0"/>
<!-- lower boom -->
<path d="M430 410L600 378 1180 308 1210 370 1120 385 900 392 640 402 560 432 450 430Z" fill="#e8e8e0"/>
<path d="M1040 285L1200 345 1180 370 1040 310Z" fill="#cfc9bb"/>
<rect x="656" y="380" width="28" height="28" fill="#d88a2a"/>
<text x="935" y="365" font-size="38" font-weight="bold" font-style="italic" fill="#8a8a80">MTI</text>
<text x="915" y="408" font-size="30" font-weight="bold" fill="#3e6b50">WAY-933-9192</text>
<!-- bucket -->
<path d="M248 327L375 318 380 490H248Z" fill="#f2f2ee"/><path d="M320 450H380V490H320Z" fill="#dcdcd6"/>
<path d="M385 315L428 312 425 390H385Z" fill="#e8e8e4"/>
<path d="M385 390Q400 430 425 395" stroke="#243a70" stroke-width="8" fill="none"/>
<path d="M420 420L490 410 600 505 540 530 470 520Z" fill="#ebebe6"/>
<path d="M295 495L445 490 445 560 295 565Z" fill="#e8e8e4"/>
<!-- utility body -->
<path d="M222 578L400 562 620 560 625 745 560 815 400 780 222 740Z" fill="#f3f3ef"/>
<path d="M222 578L280 575V745L222 740ZM400 565L465 562V770L400 780Z" fill="#e6e6e2"/>
<path d="M280 645L395 650M465 570L560 565V790L465 775Z" stroke="#8f8f88" stroke-width="3" fill="none"/>
<rect x="565" y="695" width="55" height="24" fill="#0f0f0f"/>
<rect x="432" y="725" width="32" height="55" fill="#333"/>
<path d="M600 430H630V560H600Z" fill="#55585c"/>
<!-- undercarriage -->
<path d="M400 790L620 745 800 750 810 900 640 925 400 860Z" fill="#101012"/>
<!-- cab -->
<path d="M625 432L800 415 1010 422 1080 552 1300 600 1325 770 1020 805 990 745 880 695 800 750 625 745Z" fill="#f8f8f6"/>
<path d="M630 435H680V525L630 520Z" fill="#8f9398"/>
<path d="M635 590L700 600 680 695 640 695Z" fill="#b3b6bd"/>
<path d="M680 442L785 435 795 555 680 550Z" fill="#34362f"/><path d="M690 455H740V505H690Z" fill="#8f9480"/>
<path d="M810 420L1030 442 1075 546 832 545Z" fill="#2c2f2c"/><path d="M925 475L1030 468 1060 530 925 530Z" fill="#8c9288"/>
<path d="M810 400H830L825 412H812ZM905 408L940 412 935 425 905 420ZM1005 425L1030 435 1035 445 1005 435Z" fill="#de8a38"/>
<!-- grille -->
<path d="M1168 600H1290L1297 715 1172 732Z" fill="#f4f4f4"/>
<path d="M1172 610H1288M1172 621H1289M1172 632H1290M1172 643H1291M1172 654H1292M1172 665H1293M1172 676H1293M1172 687H1294M1172 698H1295M1172 709H1296" stroke="#777" stroke-width="3"/>
<rect x="1272" y="650" width="6" height="130" fill="#1a1a1a"/>
<!-- lights -->
<path d="M1030 732H1097V772H1030Z" fill="#c87812"/><path d="M1097 726H1152V765L1097 772Z" fill="#e2e4e0"/>
<rect x="963" y="620" width="30" height="42" fill="#e28a12"/><rect x="810" y="605" width="30" height="22" fill="#d88a3a"/>
<rect x="905" y="595" width="32" height="14" fill="#444"/>
<ellipse cx="1025" cy="560" rx="24" ry="32" fill="#6c6a68"/>
<path d="M1060 565L1050 690 1000 650M1060 590L1105 605 1050 690" stroke="#777" stroke-width="5" fill="none"/>
<path d="M1020 815L1330 770 1325 810 1270 860 1040 900Z" fill="#0b0b0b"/>
<!-- wheels -->
<path d="M790 860L810 740Q860 690 930 705 985 730 1000 790L1030 900 800 930Z" fill="#141414"/>
<ellipse cx="910" cy="890" rx="120" ry="145" fill="#0d0d0d"/>
<ellipse cx="897" cy="895" rx="66" ry="83" fill="#eef0f0"/><ellipse cx="885" cy="895" rx="25" ry="32" fill="#111"/>
<ellipse cx="950" cy="905" rx="9" ry="14" fill="#8a8f96"/>
<path d="M775 800H805L800 860H770Z" fill="#ddd"/>
<ellipse cx="350" cy="790" rx="60" ry="94" fill="#0e0e0e"/>
<ellipse cx="332" cy="793" rx="28" ry="54" fill="#eee"/>
<path d="M285 740Q290 660 345 660 385 680 395 790L360 690 300 705Z" fill="#222"/>
</g>
</svg>
</svg>
</body></html>
